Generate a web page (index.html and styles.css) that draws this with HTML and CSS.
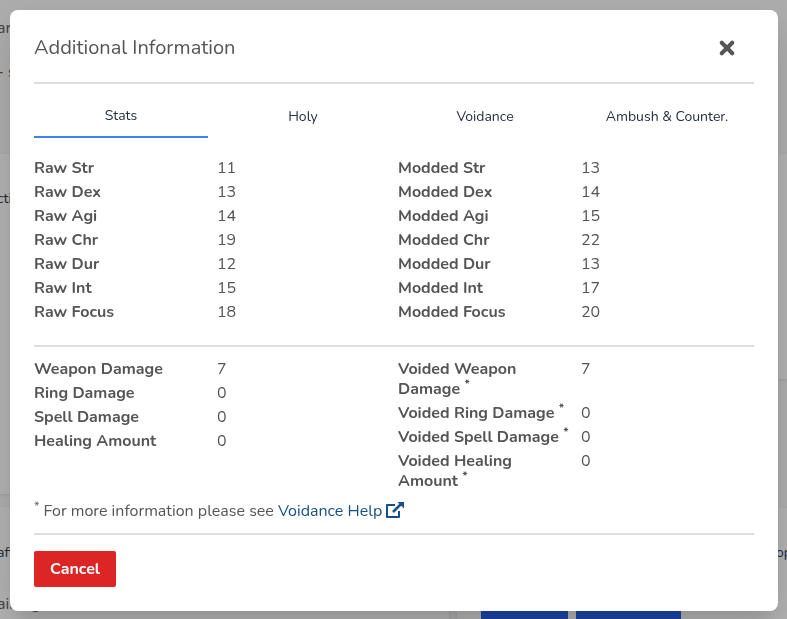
FILE: index.html
```
<!DOCTYPE html>
<html lang="en">
<head>
<meta charset="utf-8">
<title>Additional Information</title>
<link rel="stylesheet" href="styles.css">
</head>
<body>
<div class="page" aria-hidden="true">
  <div class="page-left">
    <div class="banner"><p>ar</p><p class="dash">- s</p></div>
    <div class="panel actions"><p>cti</p></div>
    <div class="panel crafting"><p>aft</p><p class="training">aining</p></div>
  </div>
  <div class="page-right">
    <div class="banner"></div>
    <div class="panel chat"></div>
    <div class="panel shop"><p>op</p><div class="page-buttons"><span class="page-button"></span><span class="page-button wide"></span></div></div>
  </div>
</div>
<main class="modal" role="dialog" aria-label="Additional Information">
  <header class="modal-header">
    <h1>Additional Information</h1>
    <button class="close" aria-label="Close"><svg viewBox="0 0 16 16"><path d="M3.3 3.3L12.7 12.7M12.7 3.3L3.3 12.7"/></svg></button>
  </header>
  <nav class="tabs">
    <button class="tab active">Stats</button>
    <button class="tab">Holy</button>
    <button class="tab">Voidance</button>
    <button class="tab">Ambush &amp; Counter.</button>
  </nav>
  <section class="columns stats">
    <dl><dt>Raw Str</dt><dd>11</dd><dt>Raw Dex</dt><dd>13</dd><dt>Raw Agi</dt><dd>14</dd><dt>Raw Chr</dt><dd>19</dd><dt>Raw Dur</dt><dd>12</dd><dt>Raw Int</dt><dd>15</dd><dt>Raw Focus</dt><dd>18</dd></dl>
    <dl><dt>Modded Str</dt><dd>13</dd><dt>Modded Dex</dt><dd>14</dd><dt>Modded Agi</dt><dd>15</dd><dt>Modded Chr</dt><dd>22</dd><dt>Modded Dur</dt><dd>13</dd><dt>Modded Int</dt><dd>17</dd><dt>Modded Focus</dt><dd>20</dd></dl>
  </section>
  <section class="columns damage">
    <dl><dt>Weapon Damage</dt><dd>7</dd><dt>Ring Damage</dt><dd>0</dd><dt>Spell Damage</dt><dd>0</dd><dt>Healing Amount</dt><dd>0</dd></dl>
    <dl><dt>Voided Weapon<br>Damage <sup>*</sup></dt><dd>7</dd><dt>Voided Ring Damage <sup>*</sup></dt><dd>0</dd><dt>Voided Spell Damage <sup>*</sup></dt><dd>0</dd><dt>Voided Healing<br>Amount <sup>*</sup></dt><dd>0</dd></dl>
  </section>
  <p class="note"><sup>*</sup> For more information please see <a href="#">Voidance Help <svg viewBox="0 0 18 16"><path class="box" d="M9 3H1V15H13V9"/><path class="arrow" d="M7 10L15 2"/><path class="head" d="M11.5 0H18V6.5Z"/></svg></a></p>
  <footer><button class="cancel">Cancel</button></footer>
</main>
</body>
</html>
```
FILE: styles.css
```
* { box-sizing: border-box; }
body {
  margin: 0;
  height: 619px;
  overflow: hidden;
  font-family: Nunito, Lato, sans-serif;
  font-size: 16px;
  line-height: 20px;
  color: #555;
}
h1, p, dl, dd { margin: 0; }
button { border: 0; background: none; font: inherit; color: inherit; padding: 0; }

.page {
  position: absolute;
  inset: 0;
  overflow: hidden;
  display: grid;
  grid-template-columns: 449px 1fr;
  column-gap: 8px;
  background: #aeaeae;
  color: #22283a;
  font-size: 14px;
}
.page-left, .page-right { display: flex; flex-direction: column; }
.page-left p { margin-left: -3px; }
.banner { height: 154px; padding-top: 18px; color: #444; font-size: 16px; }
.page .banner .dash { margin: 24px 0 0 -3px; }
.panel { background: #b3b3b3; box-shadow: 0 1px 3px rgba(0, 0, 0, .1); }
.actions { height: 340px; margin-bottom: 13px; padding-top: 35px; }
.crafting { height: 112px; padding-top: 36px; }
.training { margin-top: 31px; color: #444; font-size: 16px; }
.chat { height: 225px; margin-bottom: 129px; }
.shop { height: 111px; padding-top: 35px; }
.shop p { margin-left: 319px; }
.page-buttons { display: flex; gap: 8px; padding: 38px 0 0 24px; }
.page-button { width: 87px; height: 36px; background: #1a44a5; }
.page-button.wide { width: 105px; }

.modal {
  position: relative;
  will-change: transform;
  width: 768px;
  height: 601px;
  margin: 10px;
  padding: 0 24px;
  display: flow-root;
  background: #fff;
  border-radius: 8px;
  box-shadow: 0 11px 15px -7px rgba(0, 0, 0, .1), 0 24px 38px 3px rgba(0, 0, 0, .08), 0 9px 46px 8px rgba(0, 0, 0, .06);
}
.modal-header {
  display: flex;
  justify-content: space-between;
  align-items: center;
  height: 74px;
  padding: 3px 18px 0 0;
  border-bottom: 2px solid #ddd;
}
h1 { font-size: 20px; font-weight: 400; }
.close { width: 18px; height: 18px; }
.close svg { display: block; width: 18px; height: 18px; fill: none; stroke: #555; stroke-width: 3.6; stroke-linecap: round; }
.tabs { display: grid; grid-template-columns: repeat(4, 1fr); gap: 8px; height: 54px; }
.tab { font-size: 14px; color: #252f42; padding-top: 12px; }
.tab.active { border-bottom: 2px solid #3b82f6; }
.columns { display: grid; grid-template-columns: repeat(2, minmax(0, 1fr)); gap: 8px; }
dl { display: grid; grid-template-columns: repeat(2, minmax(0, 1fr)); gap: 4px 8px; align-content: start; }
dt { font-weight: 700; white-space: nowrap; }
dd { padding-left: 1px; }
.stats { padding: 20px 0 23px; border-bottom: 2px solid #ddd; }
.damage { padding-top: 12px; }
sup { font-size: 12px; line-height: 0; vertical-align: baseline; position: relative; top: -6px; }
.note { padding: 10px 0 12px; border-bottom: 2px solid #ddd; }
.note a { color: #154f88; text-decoration: none; }
.note svg { width: 18px; height: 16px; vertical-align: -2px; fill: none; stroke: currentColor; }
.box { stroke-width: 2; stroke-linejoin: round; }
.arrow { stroke-width: 2.5; }
.head { fill: currentColor; stroke: none; }
footer { padding-top: 16px; }
.cancel { display: block; width: 82px; height: 36px; background: #dc2626; color: #fff; font-weight: 700; border-radius: 2px; }
```
